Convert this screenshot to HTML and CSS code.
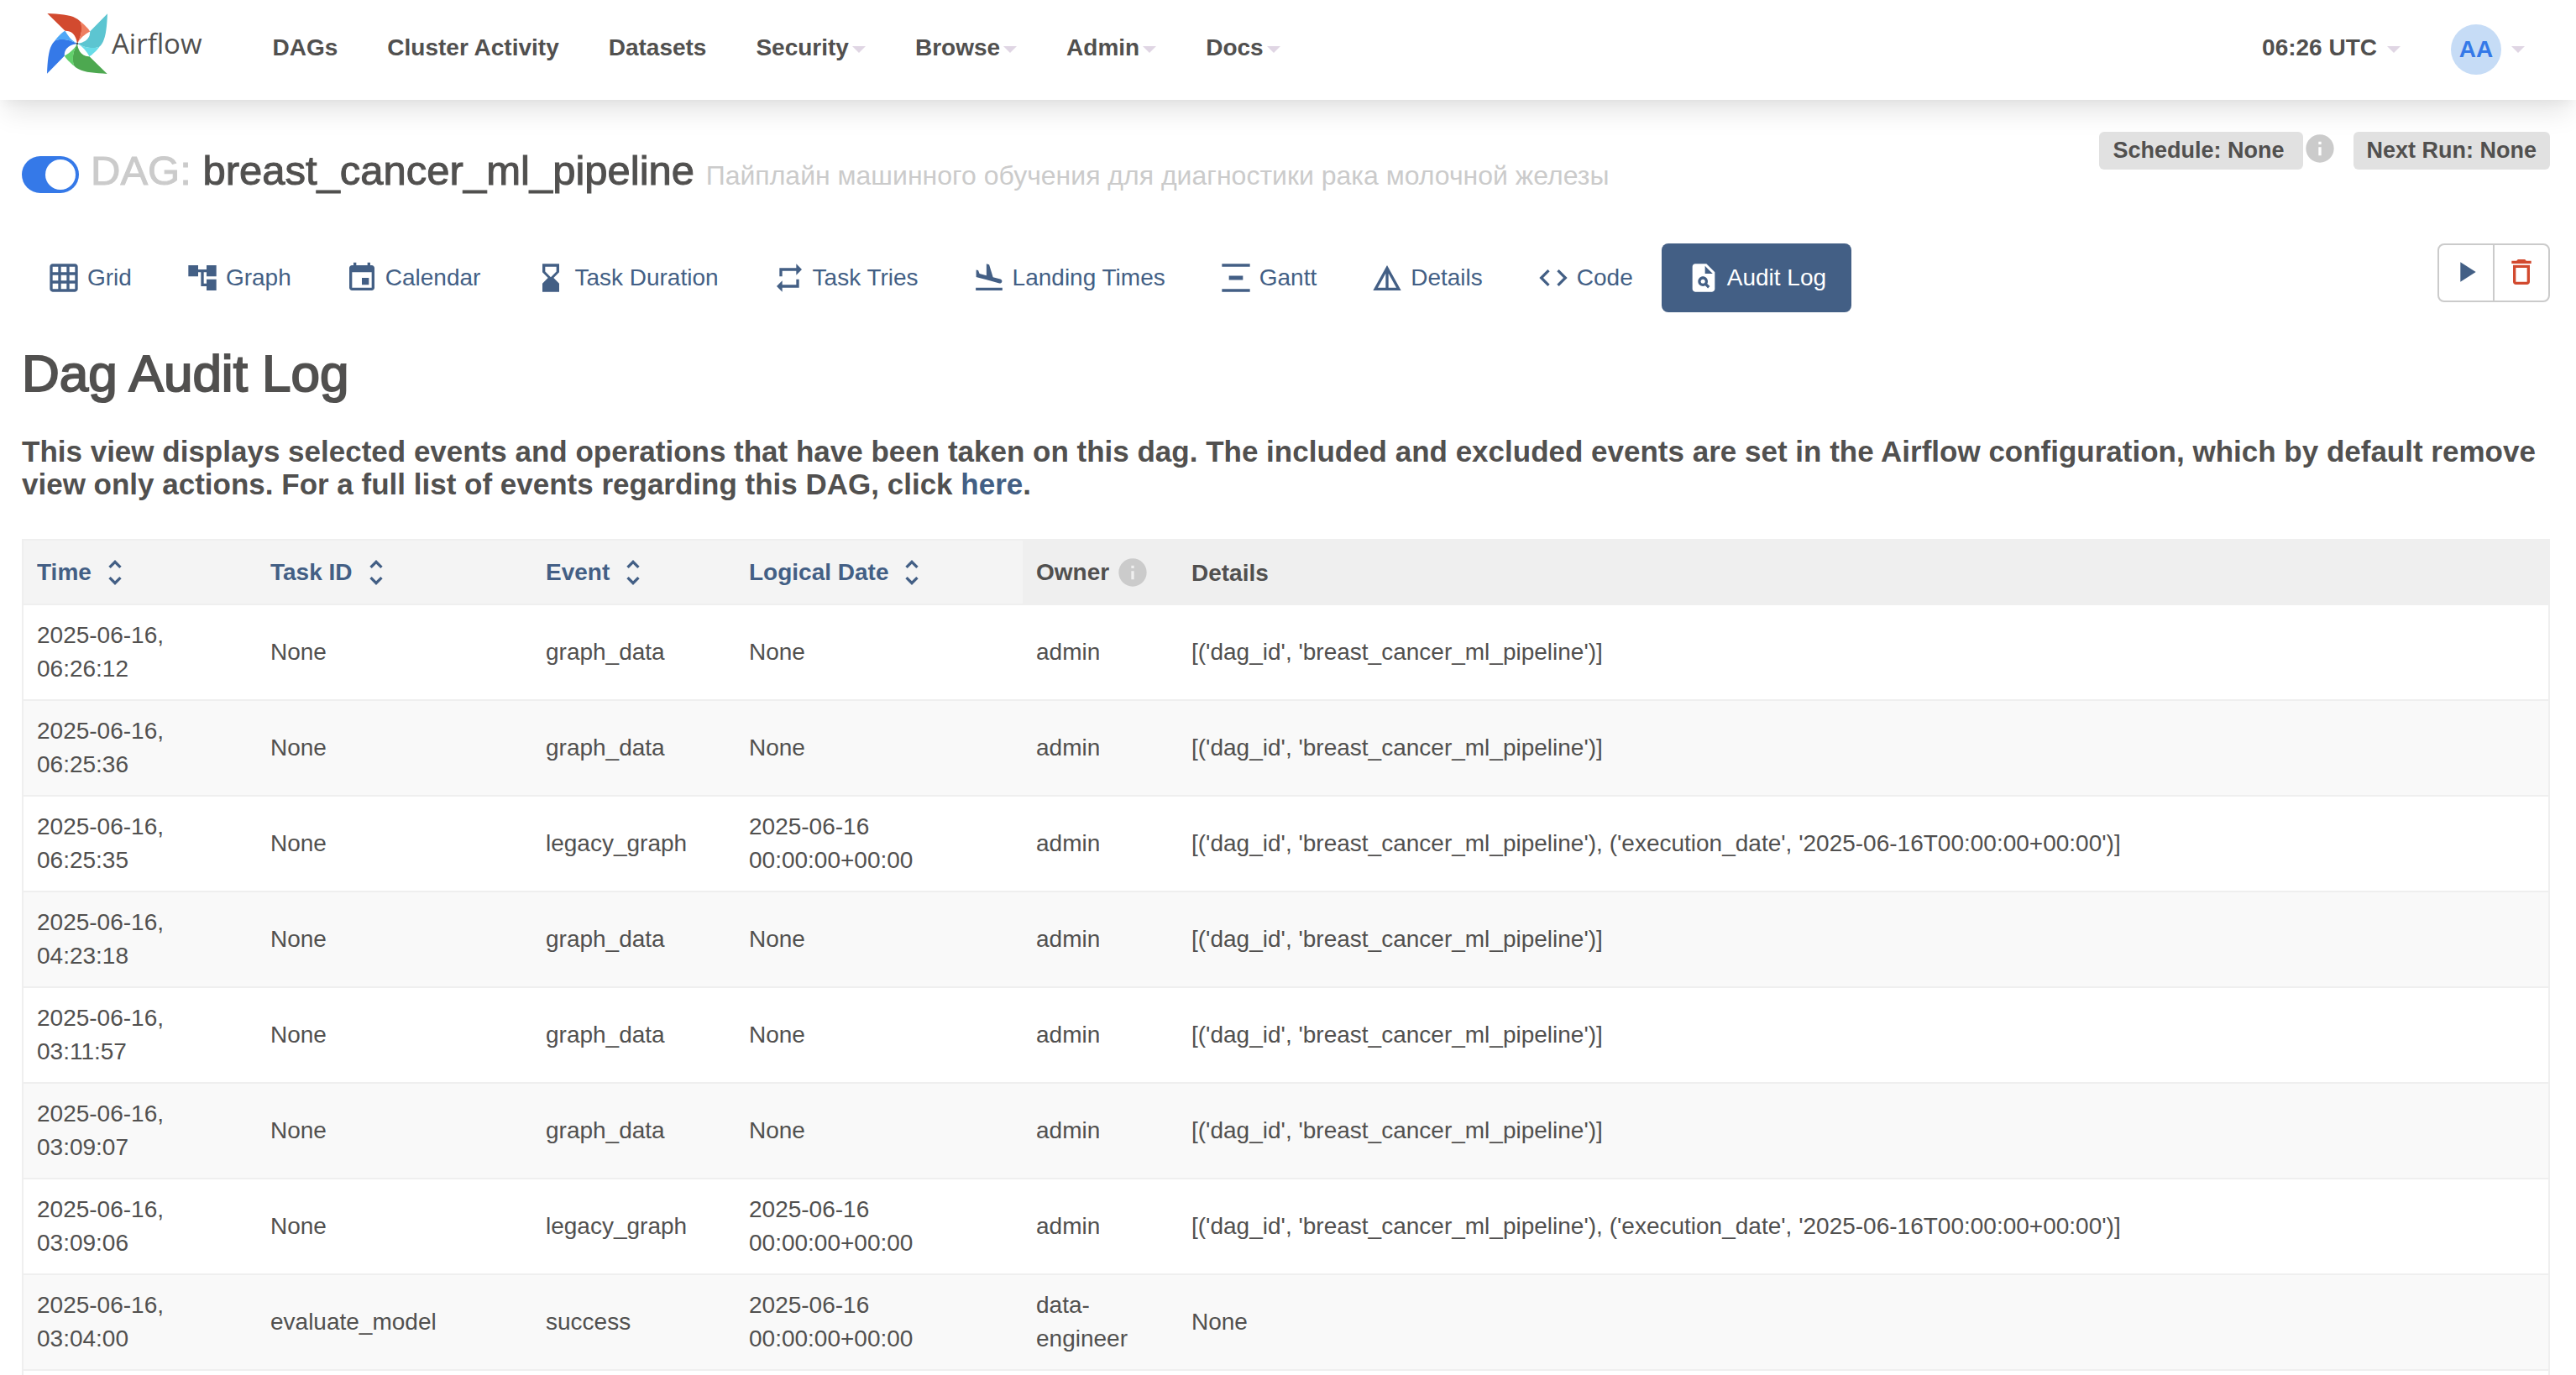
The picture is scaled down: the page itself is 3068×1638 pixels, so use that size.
FILE: index.html
```html
<!DOCTYPE html>
<html lang="en">
<head>
<meta charset="utf-8">
<title>breast_cancer_ml_pipeline - Audit Log - Airflow</title>
<link rel="stylesheet" href="styles.css">
</head>
<body>
<svg class="sprite" aria-hidden="true">
  <symbol id="sort" viewBox="0 0 24 24"><path d="M12 5.83L15.17 9l1.41-1.41L12 3 7.41 7.59 8.83 9 12 5.83zm0 12.34L8.83 15l-1.41 1.41L12 21l4.59-4.59L15.17 15 12 18.17z"/></symbol>
  <symbol id="info" viewBox="0 0 24 24"><path d="M12 2C6.48 2 2 6.48 2 12s4.48 10 10 10 10-4.48 10-10S17.52 2 12 2zm1 15h-2v-6h2v6zm0-8h-2V7h2v2z"/></symbol>
  <symbol id="caret" viewBox="0 0 16 8"><path d="M0 0h16L8 8z"/></symbol>
</svg>

<header class="navbar">
  <a class="brand" href="#">
    <svg class="pinwheel" viewBox="49 48 214 214" aria-hidden="true">
      <g>
        <path fill="#d24a2f" d="M50 48C92 50 130 53 150 64C160 69 167 75 169 80C176 110 168 132 156 155C154 138 144 108 113 110Z"/>
        <path fill="#ee7e60" d="M167 76C181 87 198 104 201 112C180 124 166 136 156 155C169 129 176 105 167 76Z"/>
      </g>
      <g transform="rotate(90 156 155)">
        <path fill="#5cc5d1" d="M50 48C92 50 130 53 150 64C160 69 167 75 169 80C176 110 168 132 156 155C154 138 144 108 113 110Z"/>
        <path fill="#68dce8" d="M167 76C181 87 198 104 201 112C180 124 166 136 156 155C169 129 176 105 167 76Z"/>
      </g>
      <g transform="rotate(180 156 155)">
        <path fill="#4da850" d="M50 48C92 50 130 53 150 64C160 69 167 75 169 80C176 110 168 132 156 155C154 138 144 108 113 110Z"/>
        <path fill="#63d06c" d="M167 76C181 87 198 104 201 112C180 124 166 136 156 155C169 129 176 105 167 76Z"/>
      </g>
      <g transform="rotate(270 156 155)">
        <path fill="#3579e8" d="M50 48C92 50 130 53 150 64C160 69 167 75 169 80C176 110 168 132 156 155C154 138 144 108 113 110Z"/>
        <path fill="#4fa8f7" d="M167 76C181 87 198 104 201 112C180 124 166 136 156 155C169 129 176 105 167 76Z"/>
      </g>
      <circle cx="156" cy="155" r="4" fill="#51504f"/>
    </svg>
    <span class="brand-name">Airflow</span>
  </a>
  <nav class="menu">
    <a href="#">DAGs</a>
    <a href="#">Cluster Activity</a>
    <a href="#">Datasets</a>
    <button type="button">Security<svg class="caret"><use href="#caret"/></svg></button>
    <button type="button">Browse<svg class="caret"><use href="#caret"/></svg></button>
    <button type="button">Admin<svg class="caret"><use href="#caret"/></svg></button>
    <button type="button">Docs<svg class="caret"><use href="#caret"/></svg></button>
  </nav>
  <div class="session">
    <button type="button" class="clock">06:26 UTC<svg class="caret"><use href="#caret"/></svg></button>
    <button type="button" class="user"><span class="avatar">AA</span><svg class="caret"><use href="#caret"/></svg></button>
  </div>
</header>

<main class="page">
  <div class="dag-head">
    <div class="dag-title">
      <input type="checkbox" class="toggle" aria-label="Pause or unpause DAG" checked>
      <h1><span class="muted">DAG:</span> breast_cancer_ml_pipeline <small>Пайплайн машинного обучения для диагностики рака молочной железы</small></h1>
    </div>
    <div class="schedule">
      <a class="label label-link" href="#">Schedule: None</a>
      <svg class="icon info"><use href="#info"/></svg>
      <span class="label next-run">Next Run: None</span>
    </div>
  </div>

  <div class="dag-bar">
    <nav class="tabs">
      <a href="#"><svg class="icon" viewBox="0 0 24 24"><path d="M20 2H4c-1.1 0-2 .9-2 2v16c0 1.1.9 2 2 2h16c1.1 0 2-.9 2-2V4c0-1.1-.9-2-2-2zM8 20H4v-4h4v4zm0-6H4v-4h4v4zm0-6H4V4h4v4zm6 12h-4v-4h4v4zm0-6h-4v-4h4v4zm0-6h-4V4h4v4zm6 12h-4v-4h4v4zm0-6h-4v-4h4v4zm0-6h-4V4h4v4z"/></svg>Grid</a>
      <a href="#"><svg class="icon" viewBox="0 0 24 24"><path d="M22 11V3h-7v3H9V3H2v8h7V8h2v10h4v3h7v-8h-7v3h-2V8h2v3z"/></svg>Graph</a>
      <a href="#"><svg class="icon" viewBox="0 0 24 24"><path d="M17 12h-5v5h5v-5zM16 1v2H8V1H6v2H5c-1.11 0-1.99.9-1.99 2L3 19c0 1.1.89 2 2 2h14c1.1 0 2-.9 2-2V5c0-1.1-.9-2-2-2h-1V1h-2zm3 18H5V8h14v11z"/></svg>Calendar</a>
      <a href="#"><svg class="icon" viewBox="0 0 24 24"><path d="M18 22l-.01-6L14 12l3.99-4.01L18 2H6v6l4 4-4 3.99V22h12zM8 7.5V4h8v3.5l-4 4-4-4z"/></svg>Task Duration</a>
      <a href="#"><svg class="icon" viewBox="0 0 24 24"><path d="M7 7h10v3l4-4-4-4v3H5v6h2V7zm10 10H7v-3l-4 4 4 4v-3h12v-6h-2v4z"/></svg>Task Tries</a>
      <a href="#"><svg class="icon" viewBox="0 0 24 24"><path d="M2.5 19h19v2h-19zm7.18-5.73l4.35 1.16 5.31 1.42c.8.21 1.62-.26 1.84-1.06.21-.8-.26-1.62-1.06-1.84l-5.31-1.42-2.76-9.02L10.12 2v8.28L5.15 8.95l-.93-2.32-1.45-.39v5.17l1.6.43 5.31 1.43z"/></svg>Landing Times</a>
      <a href="#"><svg class="icon" viewBox="0 0 24 24"><path d="M22 2v2H2V2zM7 10.5v3h10v-3zM2 20v2h20v-2z"/></svg>Gantt</a>
      <a href="#"><svg class="icon" viewBox="0 0 24 24"><path d="M12 3L2 21h20L12 3zm1 5.92L18.6 19H13V8.92zm-2 0V19H5.4L11 8.92z"/></svg>Details</a>
      <a href="#"><svg class="icon" viewBox="0 0 24 24"><path d="M9.4 16.6L4.8 12l4.6-4.6L8 6l-6 6 6 6 1.4-1.4zm5.2 0l4.6-4.6-4.6-4.6L16 6l6 6-6 6-1.4-1.4z"/></svg>Code</a>
      <a href="#" class="active" aria-current="page"><svg class="icon" viewBox="0 0 24 24"><circle cx="11.5" cy="14.5" r="1.5"/><path d="M14 2H6c-1.1 0-2 .9-2 2v16c0 1.1.9 2 2 2h12c1.1 0 2-.9 2-2V8l-6-6zm1.04 17.45l-1.88-1.88c-1.33.71-3.01.53-4.13-.59-1.37-1.37-1.37-3.58 0-4.95 1.37-1.37 3.58-1.37 4.95 0 1.12 1.12 1.31 2.8.59 4.13l1.88 1.88-1.41 1.41zM13 9V3.5L18.5 9H13z"/></svg>Audit Log</a>
    </nav>
    <div class="actions">
      <button type="button" aria-label="Trigger DAG"><svg class="icon" viewBox="0 0 24 24"><path d="M8 5v14l11-7z"/></svg></button>
      <button type="button" class="danger" aria-label="Delete DAG"><svg class="icon" viewBox="0 0 24 24"><path d="M6 19c0 1.1.9 2 2 2h8c1.1 0 2-.9 2-2V7H6v12zM8 9h8v10H8V9zm7.5-5l-1-1h-5l-1 1H5v2h14V4h-3.5z"/></svg></button>
    </div>
  </div>

  <h2>Dag Audit Log</h2>
  <h4>This view displays selected events and operations that have been taken on this dag. The included and excluded events are set in the Airflow configuration, which by default remove view only actions. For a full list of events regarding this DAG, click <a href="#">here</a>.</h4>

  <table class="log">
    <colgroup><col class="c-time"><col class="c-task"><col class="c-event"><col class="c-date"><col class="c-owner"><col></colgroup>
    <thead>
      <tr>
        <th class="sortable"><a href="#">Time<svg class="icon"><use href="#sort"/></svg></a></th>
        <th class="sortable"><a href="#">Task ID<svg class="icon"><use href="#sort"/></svg></a></th>
        <th class="sortable"><a href="#">Event<svg class="icon"><use href="#sort"/></svg></a></th>
        <th class="sortable"><a href="#">Logical Date<svg class="icon"><use href="#sort"/></svg></a></th>
        <th><span class="with-icon">Owner<svg class="icon info"><use href="#info"/></svg></span></th>
        <th>Details</th>
      </tr>
    </thead>
    <tbody>
      <tr><td>2025-06-16, 06:26:12</td><td>None</td><td>graph_data</td><td>None</td><td>admin</td><td>[('dag_id', 'breast_cancer_ml_pipeline')]</td></tr>
      <tr><td>2025-06-16, 06:25:36</td><td>None</td><td>graph_data</td><td>None</td><td>admin</td><td>[('dag_id', 'breast_cancer_ml_pipeline')]</td></tr>
      <tr><td>2025-06-16, 06:25:35</td><td>None</td><td>legacy_graph</td><td>2025-06-16 00:00:00+00:00</td><td>admin</td><td>[('dag_id', 'breast_cancer_ml_pipeline'), ('execution_date', '2025-06-16T00:00:00+00:00')]</td></tr>
      <tr><td>2025-06-16, 04:23:18</td><td>None</td><td>graph_data</td><td>None</td><td>admin</td><td>[('dag_id', 'breast_cancer_ml_pipeline')]</td></tr>
      <tr><td>2025-06-16, 03:11:57</td><td>None</td><td>graph_data</td><td>None</td><td>admin</td><td>[('dag_id', 'breast_cancer_ml_pipeline')]</td></tr>
      <tr><td>2025-06-16, 03:09:07</td><td>None</td><td>graph_data</td><td>None</td><td>admin</td><td>[('dag_id', 'breast_cancer_ml_pipeline')]</td></tr>
      <tr><td>2025-06-16, 03:09:06</td><td>None</td><td>legacy_graph</td><td>2025-06-16 00:00:00+00:00</td><td>admin</td><td>[('dag_id', 'breast_cancer_ml_pipeline'), ('execution_date', '2025-06-16T00:00:00+00:00')]</td></tr>
      <tr><td>2025-06-16, 03:04:00</td><td>evaluate_model</td><td>success</td><td>2025-06-16 00:00:00+00:00</td><td>data-engineer</td><td>None</td></tr>
      <tr><td></td><td></td><td></td><td></td><td></td><td></td></tr>
    </tbody>
  </table>
</main>
</body>
</html>
```

FILE: styles.css
```css
* {
  box-sizing: border-box;
}

body {
  margin: 0;
  height: 100vh;
  overflow: hidden;
  background: #fff;
  color: #51504f;
  font-family: "Liberation Sans", Arial, Helvetica, sans-serif;
  font-size: 28px;
  line-height: 40px;
}

a {
  color: #435f85;
  text-decoration: none;
}

button {
  margin: 0;
  padding: 0;
  border: 0;
  background: none;
  color: inherit;
  font: inherit;
}

.sprite {
  display: none;
}

.icon {
  flex: none;
  width: 40px;
  height: 40px;
  fill: currentColor;
}

.info {
  color: #cbcbcb;
}

.caret {
  flex: none;
  width: 16px;
  height: 8px;
  margin: 4px 0 0 4px;
  fill: #e0d6e4;
}

/* Top navigation */

.navbar {
  display: flex;
  align-items: flex-start;
  height: 119px;
  padding: 0 61px 0 56px;
  background: #fff;
  box-shadow: 0 20px 30px -6px rgba(0, 0, 0, 0.1), 0 8px 12px -4px rgba(0, 0, 0, 0.04);
}

.brand {
  display: flex;
  gap: 5px;
  padding-top: 16px;
  color: #51504f;
}

.pinwheel {
  width: 72px;
  height: 72px;
}

.brand-name {
  padding-top: 16px;
  font-family: "Open Sans", "Noto Sans", sans-serif;
  font-size: 33px;
}

.menu {
  display: flex;
  gap: 59px;
  padding: 37px 0 0 84px;
  font-weight: bold;
}

.menu a {
  color: #51504f;
}

.menu button,
.clock,
.user {
  display: flex;
  align-items: center;
}

.session {
  display: flex;
  align-items: flex-start;
  gap: 60px;
  margin-left: auto;
  font-weight: bold;
}

.clock {
  padding-top: 37px;
}

.user {
  padding-top: 29px;
}

.session .caret {
  margin-left: 12px;
}

.user .caret {
  margin-top: 0;
}

.avatar {
  width: 60px;
  height: 60px;
  border-radius: 50%;
  background: #c6dcf6;
  color: #3579e8;
  line-height: 60px;
  text-align: center;
}

/* DAG heading */

.page {
  padding: 38px 31px 0 26px;
}

.dag-head,
.dag-bar {
  display: flex;
  align-items: flex-start;
  justify-content: space-between;
}

.dag-title {
  display: flex;
  align-items: flex-end;
  gap: 14px;
  padding-top: 19px;
}

.toggle {
  appearance: none;
  display: flex;
  justify-content: flex-end;
  flex: none;
  width: 68px;
  height: 44px;
  margin: 0;
  padding: 4px;
  border-radius: 22px;
  background: #3579e8;
}

.toggle::before {
  content: "";
  width: 36px;
  height: 36px;
  border-radius: 50%;
  background: #fff;
}

.toggle:not(:checked) {
  justify-content: flex-start;
  background: #cbcbcb;
}

h1,
h2,
h4 {
  margin: 0;
  font-weight: normal;
}

h1 {
  font-size: 49px;
  line-height: 54px;
  -webkit-text-stroke: 1px currentColor;
}

h1 .muted,
h1 small {
  color: #cbcbcb;
}

h1 small {
  font-size: 32px;
  line-height: 32px;
  -webkit-text-stroke: 0;
}

.schedule {
  display: flex;
  align-items: flex-start;
}

.label {
  padding: 0 16px;
  border-radius: 6px;
  background: #e1e1e1;
  color: #51504f;
  font-size: 27px;
  font-weight: bold;
  line-height: 45px;
}

.label-link {
  padding-right: 22px;
}

.next-run {
  margin-left: 20px;
}

.dag-bar {
  margin-top: 60px;
}

.tabs {
  display: flex;
  gap: 4px;
}

.tabs a {
  display: flex;
  align-items: center;
  gap: 8px;
  height: 82px;
  padding: 0 30px;
  border-radius: 8px;
}

.tabs .active {
  background: #435f85;
  color: #fff;
}

.actions {
  display: flex;
  border: 2px solid #cbcbcb;
  border-radius: 8px;
}

.actions button {
  display: flex;
  padding: 12px;
  height: 66px;
  color: #435f85;
}

.actions .danger {
  border-left: 2px solid #cbcbcb;
  color: #d24a2f;
}

h2 {
  margin-top: 40px;
  font-size: 62px;
  line-height: 66px;
  -webkit-text-stroke: 2px currentColor;
}

h4 {
  margin-top: 40px;
  font-size: 35px;
  font-weight: bold;
  line-height: 39px;
}

/* Audit log table */

.log {
  width: 100%;
  margin-top: 46px;
  border: 2px solid #efefef;
  border-bottom: 0;
  border-spacing: 0;
  table-layout: fixed;
}

.c-time {
  width: 278px;
}

.c-task {
  width: 328px;
}

.c-event {
  width: 242px;
}

.c-date {
  width: 342px;
}

.c-owner {
  width: 185px;
}

.log th,
.log td {
  padding: 16px;
  border-bottom: 2px solid #efefef;
  text-align: left;
}

.log th {
  background: #efefef;
  vertical-align: bottom;
}

.log th.sortable {
  background: #f4f4f4;
}

.log th a,
.with-icon {
  display: flex;
  align-items: center;
  gap: 8px;
  height: 43px;
}

.log td {
  height: 114px;
  vertical-align: middle;
}

.log tbody tr:nth-child(even) {
  background: #f9f9f9;
}
```
